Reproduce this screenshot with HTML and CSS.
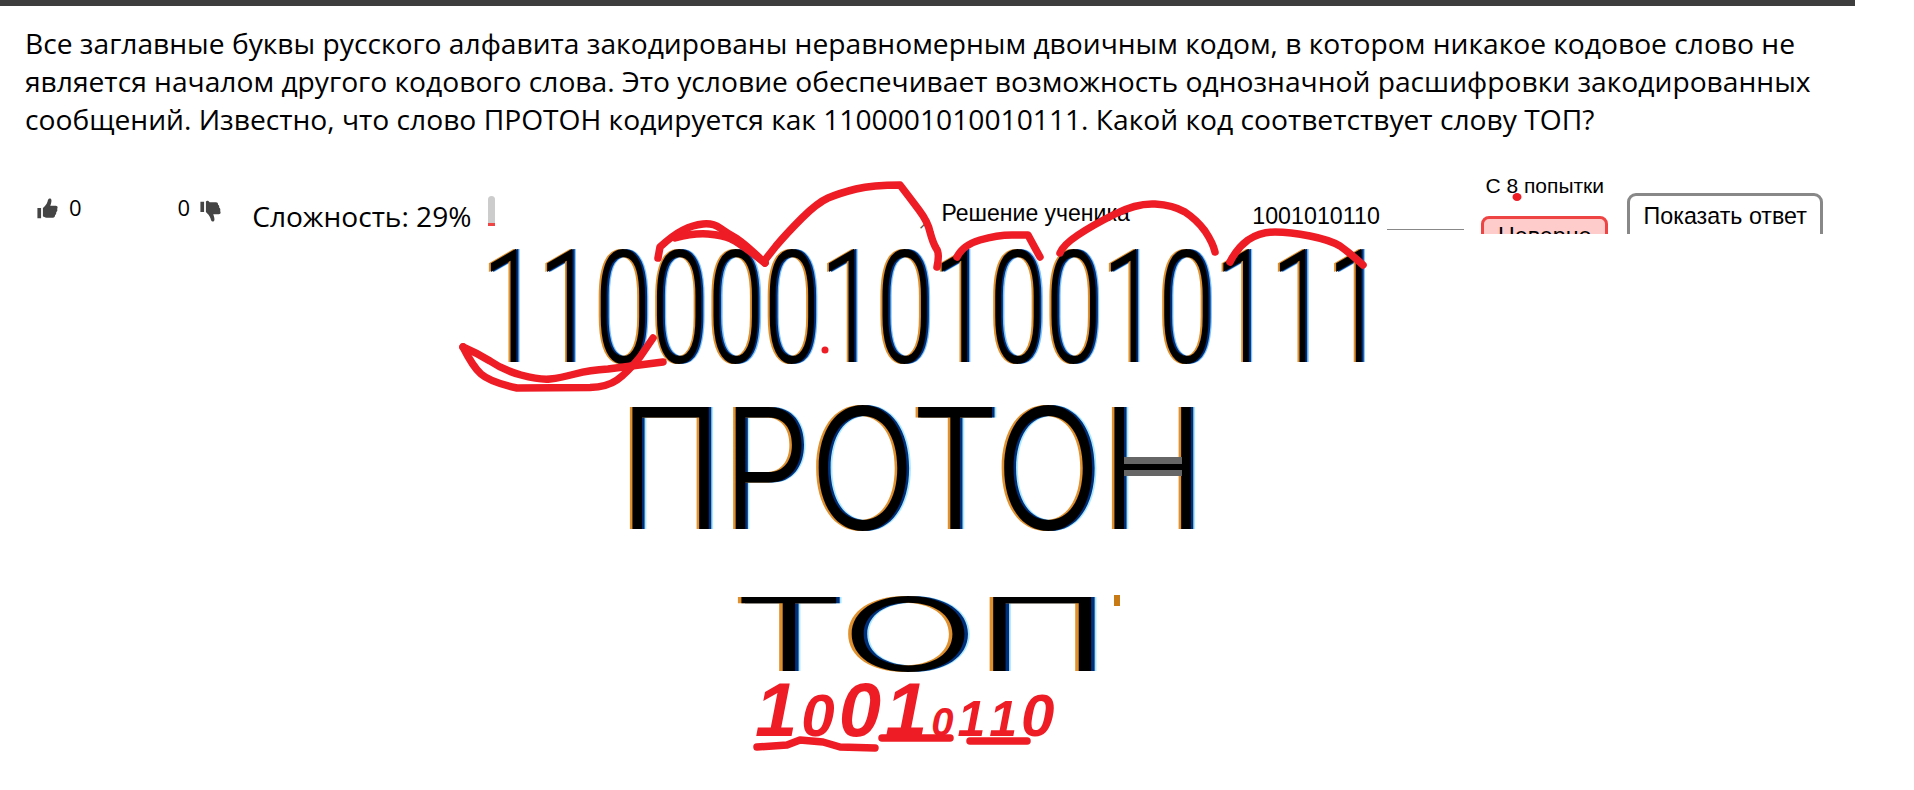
FILE: index.html
```html
<!DOCTYPE html>
<html lang="ru">
<head>
<meta charset="utf-8">
<title>Задача</title>
<link rel="stylesheet" href="styles.css">
</head>
<body>
<div class="topbar"></div>
<p class="question">Все заглавные буквы русского алфавита закодированы неравномерным двоичным кодом, в котором никакое кодовое слово не является началом другого кодового слова. Это условие обеспечивает возможность однозначной расшифровки закодированных сообщений. Известно, что слово ПРОТОН кодируется как 1100001010010111. Какой код соответствует слову ТОП?</p>
<div class="toolbar">
  <svg class="thumb thumb-up" viewBox="0 0 22 24"><path d="M0 11h4v11H0zM6 11c2-2 4-4 5-7 .5-2 1-4 3-3.500 2 .6 1.500 4 0 8h6c2 0 2.500 2 1.500 3.500.6 1.500 0 3-1 3.500.3 1.500-.4 2.800-1.300 3.200.2 1.600-.7 2.800-2.200 2.800H10c-2 0-3-1-4-1.500z"/></svg>
  <span class="count count-up">0</span>
  <span class="count count-down">0</span>
  <svg class="thumb thumb-down" viewBox="0 0 22 24"><path d="M0 2h4v11H0zM6 13c2 2 4 4 5 7 .5 2 1 4 3 3.500 2-.6 1.500-4 0-8h6c2 0 2.500-2 1.500-3.500.6-1.500 0-3-1-3.500.3-1.500-.4-2.800-1.300-3.200.2-1.600-.7-2.800-2.200-2.800H10C8 0 7 1 6 1.500z"/></svg>
  <span class="difficulty">Сложность: 29%</span>
  <span class="meter"><span class="meter-fill"></span></span>
  <span class="edit-mark">↗</span>
  <span class="solution-label">Решение ученика</span>
  <span class="answer">1001010110</span>
  <div class="attempt">
    <span class="attempt-text">С 8 попытки</span>
    <span class="verdict">Неверно</span>
  </div>
  <button class="show-answer">Показать ответ</button>
</div>
<div class="pasted">
  <div class="row row-code"><span class="big big-code">1100001010010111</span></div>
  <div class="row row-proton"><span class="big big-proton">ПРОТОН</span><span class="crossbar"></span></div>
  <div class="row row-top"><span class="big big-top">ТОП</span><span class="speck"></span></div>
  <div class="row row-hand"><span class="hand h-xl">1</span><span class="hand h-lg">0</span><span class="hand h-xl">0</span><span class="hand h-xl">1</span><span class="hand h-sm">0</span><span class="hand h-md">1</span><span class="hand h-md">1</span><span class="hand h-lg">0</span></div>
</div>
<svg class="ink" viewBox="0 0 1914 790">
  <path d="M653 338L640 357Q627 373 617 380Q607 387 590 387.500L517 388Q490 382 481 374Q473 367 463 347"/>
  <path d="M463 347Q477 353 490 361Q503 370 521 375Q540 380 550 379Q560 378 575 374Q590 370 608 369L663 362"/>
  <path d="M658 258L660 247Q673 235 683 230Q693 225 703 224Q713 223 720 228Q727 233 735 237.500Q743 242 765 263"/>
  <path d="M675 238Q693 233 708 234Q723 235 731 239Q740 243 765 263"/>
  <path d="M765 260L776 246Q787 233 802 218Q817 203 828 198Q840 193 856 189Q873 185 900 185Q910 198 919 210Q928 222 930 232Q933 243 936 248Q940 253 937 267"/>
  <path d="M957 257Q963 245 980 240Q997 235 1012 235L1028 235Q1035 248 1040 257"/>
  <path d="M1060 253Q1063 245 1078 235Q1093 225 1115 214Q1137 203 1155 204Q1173 205 1185 212Q1197 220 1205 231Q1213 243 1215 252"/>
  <path d="M1230 262Q1237 248 1248 240Q1260 232 1275 232Q1290 232 1310 236Q1330 240 1340 246Q1350 253 1363 265"/>
  <path d="M757 747L787 745L800 740L823 742L840 747L875 748"/>
  <path d="M882 738L950 738"/>
  <path d="M970 741L1027 741"/>
  <ellipse class="dot" cx="825" cy="350" rx="3.500" ry="3.500"/>
  <ellipse class="dot" cx="1517" cy="197" rx="4.500" ry="4"/>
</svg>
</body>
</html>
```
FILE: styles.css
```css
* { box-sizing: border-box; }
html, body { margin: 0; padding: 0; background: #fff; }
body { width: 1914px; height: 790px; overflow: hidden; position: relative; color: #000; }
.topbar { width: 1855px; height: 6px; background: #3d3d3d; }
.question {
  margin: 18px 0 0 25px; width: 1800px;
  font: 28.200px/38px "Open Sans", sans-serif;
}
.toolbar {
  height: 94px; margin-top: 2px; overflow: hidden;
  display: flex; align-items: flex-start; position: relative;
  font-family: "Liberation Sans", sans-serif;
}
.thumb { fill: #444; width: 21px; height: 22px; flex: none; }
.thumb-up { margin: 58px 0 0 37px; }
.count { font: 22px/24px "Open Sans", sans-serif; margin-top: 55px; }
.count-up { margin-left: 11px; }
.count-down { margin-left: 96px; }
.thumb-down { margin: 60px 0 0 10px; }
.difficulty { font: 28.100px/32px "Open Sans", sans-serif; margin: 60px 0 0 31px; white-space: nowrap; }
.meter { width: 7px; height: 30px; margin: 56px 0 0 17px; background: #ccc; border-radius: 4px 4px 0 0; position: relative; flex: none; display: flex; align-items: flex-end; }
.meter-fill { display: block; width: 100%; height: 3px; background: #e44; }
.edit-mark { font-size: 15px; color: #555; margin: 75px 0 0 423px; width: 23px; }
.solution-label { font-size: 23px; line-height: 26px; margin-top: 60px; white-space: nowrap; }
.answer { font-size: 23.250px; line-height: 26px; margin: 63px 0 0 122.500px; width: 135px; position: relative; flex: none; }
.answer::after { content: ""; position: absolute; left: 135px; top: 26px; width: 77px; height: 1px; background: #888; }
.attempt { width: 127px; margin-left: 94px; display: flex; flex-direction: column; align-items: center; flex: none; }
.attempt-text { font-size: 21px; line-height: 22px; margin-top: 35px; white-space: nowrap; }
.verdict { width: 127px; height: 50px; margin-top: 19px; border: 3px solid #e44; border-radius: 8px; background: #fcc; font-size: 23.250px; line-height: 34px; text-align: center; }
.show-answer { width: 196px; height: 60px; margin: 53px 0 0 19px; border: 3px solid #888; border-radius: 9px; background: #fff; font: 23.250px/26px "Liberation Sans", sans-serif; padding: 0 0 14px; color: #000; flex: none; }
.row { display: flex; position: relative; }
.big { font-family: Roboto, "Liberation Sans", sans-serif; font-weight: 300; display: block; transform-origin: left top; white-space: nowrap; flex: none; }
.big-code { font-size: 158px; line-height: 126px; transform: scaleX(.643); margin: 11px 0 0 482px; text-shadow: -3px 0 0 #e0902c, 3px 0 0 #00307c, 5px 0 0 #7cc4ff; }
.row-code { height: 166px; }
.big-proton { font-family: Inter, "Liberation Sans", sans-serif; font-size: 168px; line-height: 135px; transform: scaleX(.83); margin: 1px 0 0 619px; text-shadow: -3px 0 0 #e0902c, 3px 0 0 #00307c, 5px 0 0 #a8e8ff; }
.row-proton { height: 193px; }
.crossbar { position: absolute; left: 1124px; top: 57px; width: 58px; height: 19px; background: #666; display: flex; align-items: center; }
.crossbar::after { content: ""; display: block; width: 100%; height: 6px; background: #000; }
.big-top { font-family: Inter, "Liberation Sans", sans-serif; font-size: 102px; line-height: 82px; transform: scaleX(1.753); margin: 0 0 0 732px; text-shadow: -2px 0 0 #e0902c, 2px 0 0 #00307c, 3px 0 0 #a8e8ff; }
.row-top { height: 82px; }
.speck { position: absolute; left: 1114px; top: 2px; width: 6px; height: 11px; background: #c87a14; }
.row-hand { padding-left: 755px; align-items: baseline; height: 70px; gap: 4px; }
.hand { font: italic 700 60px/70px "Liberation Sans", sans-serif; color: #ee1c25; display: block; }
.h-xl { font-size: 76px; }
.h-lg { font-size: 60px; }
.h-md { font-size: 50px; }
.h-sm { font-size: 40px; }
.ink { position: absolute; left: 0; top: 0; width: 1914px; height: 790px; pointer-events: none; }
.ink path { fill: none; stroke: #ee1c25; stroke-width: 7.500; stroke-linecap: round; stroke-linejoin: round; }
.ink .dot { fill: #ee1c25; }
```
